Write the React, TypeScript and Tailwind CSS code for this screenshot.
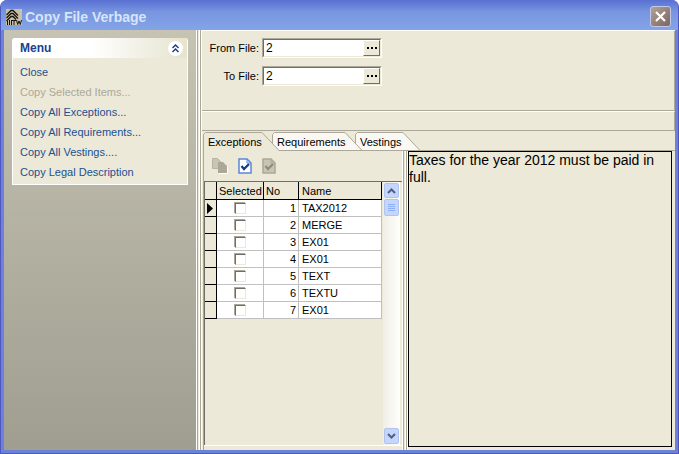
import { useState } from "react";

interface Row {
  no: number;
  name: string;
}

const rows: Row[] = [
  { no: 1, name: "TAX2012" },
  { no: 2, name: "MERGE" },
  { no: 3, name: "EX01" },
  { no: 4, name: "EX01" },
  { no: 5, name: "TEXT" },
  { no: 6, name: "TEXTU" },
  { no: 7, name: "EX01" },
];

const menuItems = [
  { label: "Close" },
  { label: "Copy Selected Items...", disabled: true },
  { label: "Copy All Exceptions..." },
  { label: "Copy All Requirements..." },
  { label: "Copy All Vestings...." },
  { label: "Copy Legal Description" },
];

// earlier tabs overlap the slanted start of the next one
const tabs = [
  { label: "Exceptions", className: "z-30 w-[69px]", shape: "M.5 19.500V2.500L2.500.5H59L77 19.500" },
  { label: "Requirements", className: "z-20 w-[83px]", shape: "M.5 19.500V2.500L2.500.5H73L91 19.500" },
  { label: "Vestings", className: "z-10 w-[58px]", shape: "M.5 19.500V2.500L2.500.5H48L66 19.500" },
];

function TitleBar() {
  return (
    <header className="flex h-[30px] shrink-0 items-center bg-linear-to-b from-[#5a70d4] via-[#7896e0] via-40% to-[#84a4e8] pt-[3px] pr-[7px] pl-[5px]">
      <svg width="16" height="16" viewBox="0 0 16 16" className="shrink-0 bg-[#c8c0a8]" aria-hidden="true">
        <path d="M.5 6 5 1.500h2L12 6.500M.5 9 5 4.500h2l5 5M.5 12 5 7.500h2l3 3" fill="none" stroke="#14120c" strokeWidth="1.300" />
        <path d="M1.500 16v-4M3.500 16v-5M5.500 16v-5M6 11.500h4M8 11.500V16M10.500 11l1.200 4.500L13 12l1.300 3.500L15.500 11" fill="none" stroke="#14120c" />
      </svg>
      <h1 className="ml-[3px] flex-1 text-[14px] leading-[18px] font-bold text-[#d8e4f8]">Copy File Verbage</h1>
      <button aria-label="Close window" className="flex size-[21px] items-center justify-center rounded-[3px] border border-[#c4c8e8] bg-linear-to-br from-[#b0a498] to-[#7c6660]">
        <svg width="11" height="11" viewBox="0 0 11 11">
          <path d="m1 1 9 9M10 1 1 10" stroke="#fff" strokeWidth="2.200" />
        </svg>
      </button>
    </header>
  );
}

function Sidebar() {
  return (
    <aside className="w-[192px] shrink-0 bg-linear-to-b from-[#c6c3b3] to-[#a09e90] px-2 pt-2">
      <nav className="overflow-hidden rounded-t-[3px] border border-t-0 border-white bg-[#ece9d8] text-[#215090]">
        <div className="flex h-[20px] items-center justify-between bg-linear-to-r from-white from-45% to-[#e6e3cf] pr-[4px] pl-[7px]">
          <h2 className="text-[12px] font-bold text-[#20408c]">Menu</h2>
          <button aria-label="Collapse menu" className="flex size-[15px] items-center justify-center rounded-full bg-white">
            <svg width="9" height="9" viewBox="0 0 9 9">
              <path d="m1.500 4 3-3 3 3m-6 4 3-3 3 3" fill="none" stroke="#20408c" strokeWidth="1.500" />
            </svg>
          </button>
        </div>
        <ul className="flex flex-col pt-1 pb-0.5 pl-[7px]">
          {menuItems.map((item) => (
            <li key={item.label} className="flex h-5 items-center">
              <button disabled={item.disabled} className="disabled:text-[#aca899]">
                {item.label}
              </button>
            </li>
          ))}
        </ul>
      </nav>
    </aside>
  );
}

function Splitter() {
  return (
    <div className="flex w-[6px] shrink-0 justify-between border-x border-white bg-[#ece9d8]">
      <div className="w-px bg-[#aca899]" />
      <div className="w-px bg-white" />
      <div className="w-px bg-[#aca899]" />
    </div>
  );
}

function FileField({ id, label }: { id: string; label: string }) {
  const [value, setValue] = useState("2");
  return (
    <div className="flex items-center">
      <label htmlFor={id} className="w-[54px] pr-[3px] text-right">
        {label}
      </label>
      <div className="flex h-[20px] w-[120px] border border-t-[#aca899] border-r-white border-b-white border-l-[#aca899]">
        <div className="flex flex-1 border border-t-[#716f64] border-r-[#ece9d8] border-b-[#ece9d8] border-l-[#716f64] bg-white">
          <input id={id} value={value} onChange={(e) => setValue(e.target.value)} className="w-0 flex-1 pl-[2px] text-[12px] leading-[14px] outline-none" />
          <button
            aria-label={`Browse ${label}`}
            className="flex w-[17px] items-center justify-center border border-t-white border-r-[#716f64] border-b-[#716f64] border-l-white bg-[#ece9d8]"
          >
            <svg width="10" height="2" viewBox="0 0 10 2">
              <path d="M0 0h2v2H0zM4 0h2v2H4zM8 0h2v2H8z" />
            </svg>
          </button>
        </div>
      </div>
    </div>
  );
}

function TabStrip({ active, onSelect }: { active: number; onSelect: (i: number) => void }) {
  return (
    <div role="tablist" className="flex h-[20px] items-end border-b border-[#aca899]">
      {tabs.map((tab, i) => (
        <button
          key={tab.label}
          role="tab"
          aria-selected={i === active}
          onClick={() => onSelect(i)}
          className={`relative h-[18px] pt-px pl-[5px] text-left ${tab.className}`}
        >
          <svg width="92" height="19" viewBox="0 0 92 19" className="absolute top-0 left-0" aria-hidden="true">
            <path d={tab.shape} fill={i === active ? "#ece9d8" : "#f9f8f3"} stroke="#aca899" />
            {i !== active && <path d="M0 18.500h92" stroke="#aca899" />}
          </svg>
          <span className="relative">{tab.label}</span>
        </button>
      ))}
    </div>
  );
}

function Toolbar() {
  return (
    <div className="flex h-[30px] items-center gap-[10px] pl-[8px]">
      <button aria-label="Copy" disabled>
        <svg width="16" height="16" viewBox="0 0 16 16">
          <path d="M7 5h5l4 4v7H7z" fill="#fff" />
          <path d="M.5.5h5l3 3v7h-8z" fill="#c9c5b5" stroke="#b8b4a4" />
          <path d="M6 4h5l4 4v7H6z" fill="#aca899" />
        </svg>
      </button>
      <button aria-label="Select all">
        <svg width="14" height="16" viewBox="0 0 14 16">
          <path d="M1 1h8l4 4v10H1z" fill="#fff" stroke="#5b85d8" strokeWidth="1.500" />
          <path d="M9 1v4h4" fill="none" stroke="#5b85d8" />
          <path d="m3.500 8 2.500 3 5-5" fill="none" stroke="#183c84" strokeWidth="2.200" />
        </svg>
      </button>
      <button aria-label="Clear selection" disabled>
        <svg width="14" height="16" viewBox="0 0 14 16">
          <path d="M1 1h8l4 4v10H1z" fill="#c9c5b5" stroke="#aca899" strokeWidth="1.500" />
          <path d="M9 1v4h4" fill="none" stroke="#aca899" />
          <path d="m3.500 8 2.500 3 5-5" fill="none" stroke="#8f8b7c" strokeWidth="2.200" />
        </svg>
      </button>
    </div>
  );
}

function ScrollBar() {
  const button = "flex w-[15px] items-center justify-center rounded-[2px] border border-[#b0c4f0] bg-[#c6d5fc]";
  return (
    <div className="flex w-[17px] shrink-0 flex-col items-center bg-linear-to-r from-[#f0eee6] to-[#fefefb] py-px">
      <button aria-label="Scroll up" className={`${button} h-[15px]`}>
        <svg width="9" height="6" viewBox="0 0 9 6">
          <path d="m1 5 3.500-3.500L8 5" fill="none" stroke="#4d6185" strokeWidth="2" />
        </svg>
      </button>
      <div className={`${button} mt-px h-[17px]`}>
        <svg width="7" height="8" viewBox="0 0 7 8">
          <path d="M0 .5h7M0 2.500h7M0 4.500h7M0 6.500h7" stroke="#8cb0f8" />
        </svg>
      </div>
      <div className="flex-1" />
      <button aria-label="Scroll down" className={`${button} h-[16px]`}>
        <svg width="9" height="6" viewBox="0 0 9 6">
          <path d="m1 1 3.500 3.500L8 1" fill="none" stroke="#4d6185" strokeWidth="2" />
        </svg>
      </button>
    </div>
  );
}

function ItemsGrid() {
  return (
    <div className="flex flex-1 justify-between border-t border-l border-[#716f64] pr-[2px]">
      <table className="w-[177px] table-fixed border-separate border-spacing-0 self-start">
        <colgroup>
          <col className="w-[12px]" />
          <col className="w-[47px]" />
          <col className="w-[35px]" />
          <col className="w-[83px]" />
        </colgroup>
        <thead>
          <tr className="h-[18px] bg-[#ece9d8] text-left *:border-r *:border-b *:border-black *:p-0 *:font-normal">
            <th />
            <th className="pl-[2px]!">Selected</th>
            <th className="pl-[2px]!">No</th>
            <th className="pl-[3px]!">Name</th>
          </tr>
        </thead>
        <tbody>
          {rows.map((row, i) => (
            <tr key={row.no} className="h-[17px] bg-white *:border-r *:border-b *:border-[#c0c0c0] *:p-0">
              <td className="border-black! bg-[#ece9d8]">
                {i === 0 && (
                  <svg width="6" height="11" viewBox="0 0 6 11" className="ml-[2px]">
                    <path d="M0 0v11l6-5.500z" />
                  </svg>
                )}
              </td>
              <td>
                <input
                  type="checkbox"
                  aria-label={`Select item ${row.no}`}
                  className="mx-auto block size-[11px] appearance-none border border-t-[#716f64] border-r-[#ece9d8] border-b-[#ece9d8] border-l-[#716f64] bg-white shadow-[-1px_-1px_0_#aca899] checked:bg-[#716f64]"
                />
              </td>
              <td className="pr-[2px]! text-right">{row.no}</td>
              <td className="pl-[3px]!">{row.name}</td>
            </tr>
          ))}
        </tbody>
      </table>
      <ScrollBar />
    </div>
  );
}

export default function App() {
  const [active, setActive] = useState(0);

  return (
    <div className="flex min-h-screen flex-col overflow-hidden rounded-t-[7px] border-x border-b border-[#5058c0] bg-[#6c82da] font-[Liberation_Sans,Arial,sans-serif] text-[11px] leading-[16px] text-black">
      <TitleBar />
      <div className="mx-[3px] mb-[3px] flex flex-1 bg-[#ece9d8]">
        <Sidebar />
        <Splitter />
        <main className="flex min-w-0 flex-1 flex-col border-t border-white">
          <section className="flex h-[80px] flex-col gap-2 border-r border-b border-[#aca899] pt-[7px] pl-[6px]">
            <FileField id="from-file" label="From File:" />
            <FileField id="to-file" label="To File:" />
          </section>
          <div className="h-[20px] border-t border-r border-b border-t-white border-r-[#aca899] border-b-[#aca899]" />
          <div className="flex flex-1 flex-col pl-px">
            <TabStrip active={active} onSelect={setActive} />
            <div className="flex flex-1 border-l border-[#aca899]">
              <div className="mb-1 flex w-[198px] flex-col border-b border-white">
                <Toolbar />
                <ItemsGrid />
              </div>
              <Splitter />
              <div className="mr-[3px] mb-[3px] min-w-0 flex-1 border border-black text-[14px] leading-[17px]">
                <p>Taxes for the year 2012 must be paid in full.</p>
              </div>
            </div>
          </div>
        </main>
      </div>
    </div>
  );
}
